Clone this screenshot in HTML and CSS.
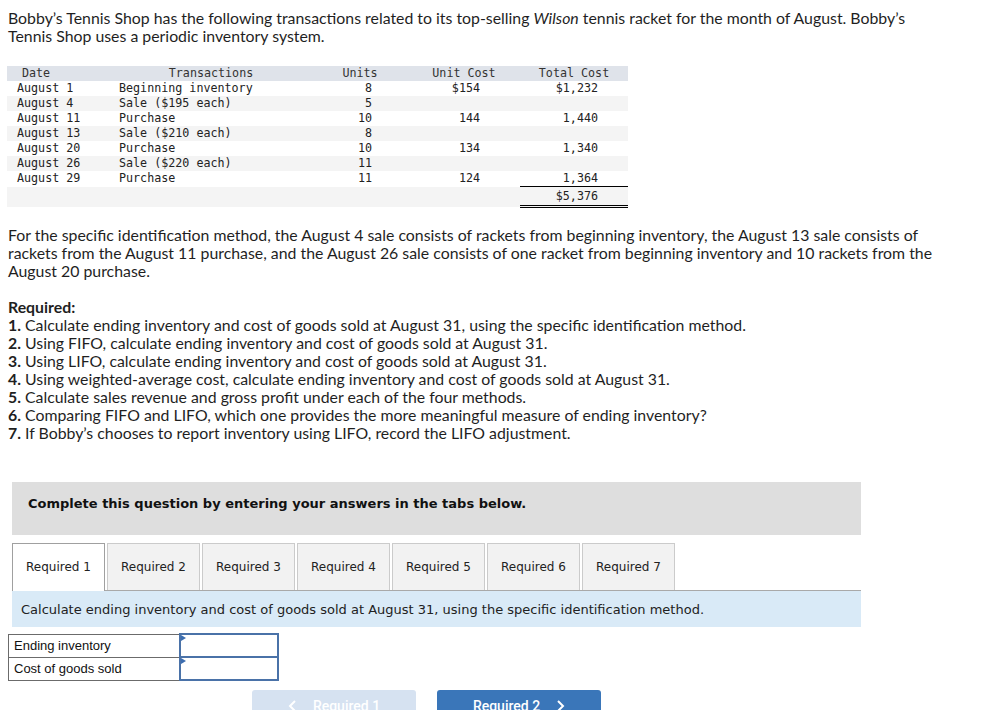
FILE: index.html
```html
<!DOCTYPE html>
<html>
<head>
<meta charset="utf-8">
<link rel="stylesheet" href="styles.css">
</head>
<body>
<div class="page">
  <p class="para intro">Bobby’s Tennis Shop has the following transactions related to its top-selling <em>Wilson</em> tennis racket for the month of August. Bobby’s<br>Tennis Shop uses a periodic inventory system.</p>

  <table class="tx">
    <colgroup>
      <col class="w-date"><col class="w-tr"><col class="w-units"><col class="w-uc"><col class="w-tc">
    </colgroup>
    <thead>
      <tr><th class="h-date">Date</th><th>Transactions</th><th>Units</th><th>Unit Cost</th><th>Total Cost</th></tr>
    </thead>
    <tbody>
      <tr><td class="d">August 1</td><td class="t">Beginning inventory</td><td class="u">8</td><td class="uc">$154</td><td class="tc">$1,232</td></tr>
      <tr class="alt"><td class="d">August 4</td><td class="t">Sale ($195 each)</td><td class="u">5</td><td class="uc"></td><td class="tc"></td></tr>
      <tr><td class="d">August 11</td><td class="t">Purchase</td><td class="u">10</td><td class="uc">144</td><td class="tc">1,440</td></tr>
      <tr class="alt"><td class="d">August 13</td><td class="t">Sale ($210 each)</td><td class="u">8</td><td class="uc"></td><td class="tc"></td></tr>
      <tr><td class="d">August 20</td><td class="t">Purchase</td><td class="u">10</td><td class="uc">134</td><td class="tc">1,340</td></tr>
      <tr class="alt"><td class="d">August 26</td><td class="t">Sale ($220 each)</td><td class="u">11</td><td class="uc"></td><td class="tc"></td></tr>
      <tr><td class="d">August 29</td><td class="t">Purchase</td><td class="u">11</td><td class="uc">124</td><td class="tc under">1,364</td></tr>
      <tr class="alt total"><td></td><td></td><td></td><td></td><td class="tc dbl">$5,376</td></tr>
    </tbody>
  </table>

  <p class="para spec">For the specific identification method, the August 4 sale consists of rackets from beginning inventory, the August 13 sale consists of<br>rackets from the August 11 purchase, and the August 26 sale consists of one racket from beginning inventory and 10 rackets from the<br>August 20 purchase.</p>

  <div class="para req">
    <div class="req-title">Required:</div>
    <div><b>1.</b> Calculate ending inventory and cost of goods sold at August 31, using the specific identification method.</div>
    <div><b>2.</b> Using FIFO, calculate ending inventory and cost of goods sold at August 31.</div>
    <div><b>3.</b> Using LIFO, calculate ending inventory and cost of goods sold at August 31.</div>
    <div><b>4.</b> Using weighted-average cost, calculate ending inventory and cost of goods sold at August 31.</div>
    <div><b>5.</b> Calculate sales revenue and gross profit under each of the four methods.</div>
    <div><b>6.</b> Comparing FIFO and LIFO, which one provides the more meaningful measure of ending inventory?</div>
    <div><b>7.</b> If Bobby’s chooses to report inventory using LIFO, record the LIFO adjustment.</div>
  </div>

  <div class="banner">Complete this question by entering your answers in the tabs below.</div>

  <div class="tabs">
    <div class="tab active">Required 1</div>
    <div class="tab">Required 2</div>
    <div class="tab">Required 3</div>
    <div class="tab">Required 4</div>
    <div class="tab">Required 5</div>
    <div class="tab">Required 6</div>
    <div class="tab">Required 7</div>
  </div>
  <div class="instr">Calculate ending inventory and cost of goods sold at August 31, using the specific identification method.</div>

  <table class="answer">
    <tr><td class="lbl">Ending inventory</td><td class="inp"><span class="flag"></span></td></tr>
    <tr><td class="lbl">Cost of goods sold</td><td class="inp"><span class="flag"></span></td></tr>
  </table>

  <div class="nav">
    <div class="btn prev">
      <svg width="9" height="14" viewBox="0 0 9 14"><polyline points="7,2 2,7 7,12" fill="none" stroke="#ffffff" stroke-width="2"/></svg>
      <span>Required 1</span>
    </div>
    <div class="btn next">
      <span>Required 2</span>
      <svg width="9" height="14" viewBox="0 0 9 14"><polyline points="2,2 7,7 2,12" fill="none" stroke="#ffffff" stroke-width="2"/></svg>
    </div>
  </div>
</div>
</body>
</html>
```

FILE: styles.css
```css
html, body {
  margin: 0;
  padding: 0;
  background: #ffffff;
}
.page {
  padding: 9px 8px 0 8px;
  width: 982px;
  box-sizing: border-box;
  color: #222222;
}
.para {
  font-family: Lato, "Open Sans", sans-serif;
  font-size: 15.85px;
  line-height: 18px;
  margin: 0;
  color: #1f1f1f;
  white-space: nowrap;
}
.intro { margin-bottom: 21px; }

.tx {
  border-collapse: collapse;
  border-spacing: 0;
  margin-left: -1px;
  font-family: "DejaVu Sans Mono", "Liberation Mono", monospace;
  font-size: 11.7px;
  color: #222222;
  table-layout: fixed;
  width: 621px;
}
.w-date { width: 103px; }
.w-tr { width: 202px; }
.w-units { width: 96px; }
.w-uc { width: 112px; }
.w-tc { width: 108px; }
.tx th {
  background: #dfe3ea;
  font-weight: normal;
  height: 15px;
  line-height: 15px;
  padding: 0;
  text-align: center;
  color: #333333;
}
.tx th.h-date { text-align: left; padding-left: 15px; }
.tx td {
  height: 15px;
  line-height: 15px;
  padding: 0;
  white-space: nowrap;
}
.tx tr.alt td { background: #f4f4f4; }
.tx td.d { padding-left: 10px; }
.tx td.t { padding-left: 9px; }
.tx td.u { text-align: right; padding-right: 36px; }
.tx td.uc { text-align: right; padding-right: 40px; }
.tx td.tc { text-align: right; padding-right: 30px; }
.tx td.under { border-bottom: 1px solid #000000; }
.tx tr.total td {
  height: 18px;
  padding-top: 0;
  vertical-align: middle;
}
.tx td.dbl { border-bottom: 3px double #000000; }

.spec { margin-top: 18px; margin-bottom: 18px; }
.req-title { font-weight: bold; }
.req b { font-weight: bold; }

.banner {
  margin: 40px 0 0 4px;
  width: 849px;
  box-sizing: border-box;
  background: #dedede;
  padding: 13px 16px 22px 16px;
  font-family: "DejaVu Sans", Verdana, sans-serif;
  font-weight: bold;
  font-size: 13px;
  line-height: 18px;
  color: #111111;
}

.tabs {
  margin: 8px 0 0 4px;
  width: 849px;
  display: flex;
  gap: 2px;
  border-bottom: 1px solid #a9a9a9;
  height: 47px;
}
.tab {
  width: 93px;
  height: 47px;
  box-sizing: border-box;
  border: 1px solid #cbcbcb;
  border-bottom: none;
  background: #f2f2f2;
  display: flex;
  align-items: center;
  justify-content: center;
  font-family: "DejaVu Sans", Verdana, sans-serif;
  font-size: 12px;
  color: #222222;
  padding-bottom: 1px;
}
.tab.active {
  background: #ffffff;
  border-color: #a0a0a0;
  height: 48px;
  margin-bottom: -1px;
  padding-bottom: 2px;
}

.instr {
  margin-left: 4px;
  width: 849px;
  height: 36px;
  box-sizing: border-box;
  background: #d9eaf7;
  padding-left: 9px;
  display: flex;
  align-items: center;
  font-family: "DejaVu Sans", Verdana, sans-serif;
  font-size: 13px;
  color: #222222;
}

.answer {
  margin-top: 6px;
  border-collapse: collapse;
  border-spacing: 0;
  font-family: "Liberation Sans", Arial, sans-serif;
  font-size: 13px;
  color: #111111;
}
.answer td {
  height: 23px;
  padding: 0;
  box-sizing: border-box;
}
.answer td.lbl {
  width: 171px;
  border: 1px solid #6b6b6b;
  padding-left: 5px;
}
.answer td.inp {
  width: 98px;
  border: 2px solid #4a72a8;
  position: relative;
  background: #ffffff;
}
.flag {
  position: absolute;
  left: 0;
  top: 0;
  width: 0;
  height: 0;
  border-top: 3px solid transparent;
  border-bottom: 3px solid transparent;
  border-left: 5px solid #3c6db0;
}

.nav {
  display: flex;
  gap: 21px;
  margin: 9px 0 0 244px;
}
.btn {
  width: 164px;
  height: 36px;
  border-radius: 3px;
  display: flex;
  align-items: flex-start;
  justify-content: center;
  gap: 16px;
  font-family: Roboto, "Liberation Sans", sans-serif;
  font-weight: 500;
  font-size: 14px;
  line-height: 16px;
  color: #ffffff;
  padding-top: 8px;
  box-sizing: border-box;
}
.btn svg { margin-top: 1px; }
.btn.prev { background: #d6e2f1; }
.btn.next { background: #3a76b9; }
```
